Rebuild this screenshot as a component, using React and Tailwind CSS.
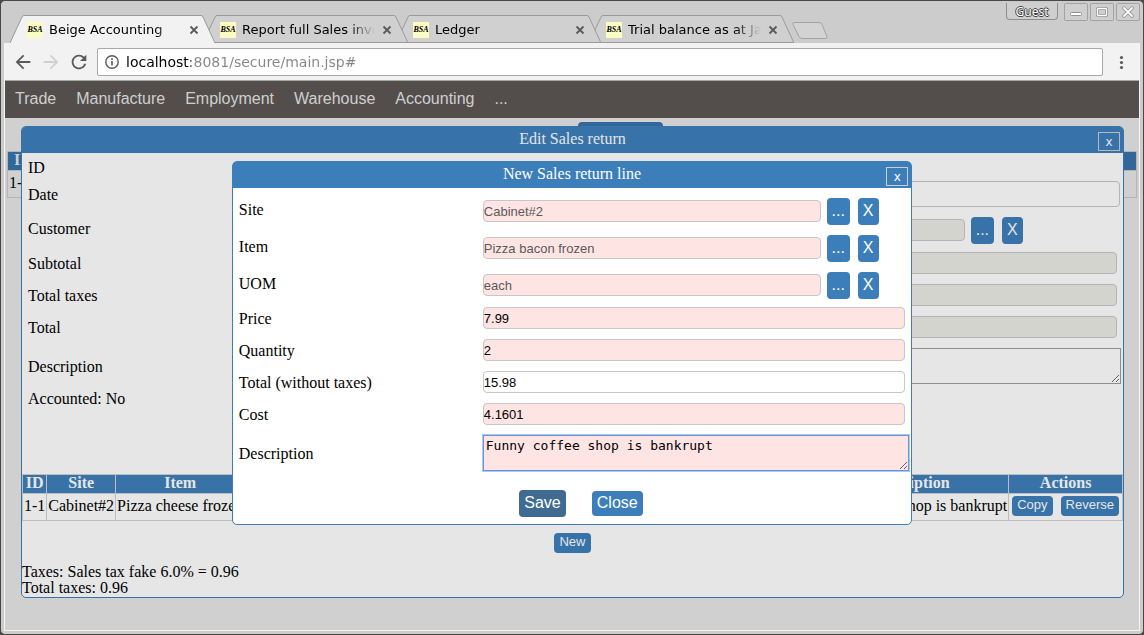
import React from "react";

const tabs = [
  { title: "Beige Accounting", active: true },
  { title: "Report full Sales invoice lines" },
  { title: "Ledger" },
  { title: "Trial balance as at Jan 31" },
];

const stack = ["z-40", "z-30", "z-20", "z-10"];

function Tab({ title, active, layer }) {
  return (
    <div className={`relative -mr-3 flex h-7 w-[205px] items-center pt-0.5 pl-[17px] ${layer}`}>
      <svg className="absolute inset-0 h-7 w-[205px]" viewBox="0 0 205 28" aria-hidden="true">
        <path
          d="M0 28 L12 2 Q12.500 .5 14 .5 H191 Q192.500 .5 193 2 L205 28 Z"
          fill={active ? "#f2f2f2" : "#d0d0d0"}
        />
        <path
          d="M0 28 L12 2 Q12.500 .5 14 .5 H191 Q192.500 .5 193 2 L205 28"
          fill="none"
          stroke="#9a9a9a"
        />
        {!active && <path d="M0 27.500 H205" stroke="#9a9a9a" />}
      </svg>
      <span className="relative flex size-4 items-center justify-center bg-[#fbfbc4] font-['Liberation_Serif',serif] text-[8px] leading-4 font-bold text-black italic">
        BSA
      </span>
      <span className="relative ml-1.5 w-[133px] overflow-hidden mask-r-from-80% font-['DejaVu_Sans',sans-serif] text-[13px] leading-5 whitespace-nowrap text-black">
        {title}
      </span>
      <button className="relative ml-1 flex size-4 items-center justify-center" aria-label={`Close ${title}`}>
        <svg className="size-2.5" viewBox="0 0 10 10" aria-hidden="true">
          <path d="M1.500 1.500 L8.500 8.500 M8.500 1.500 L1.500 8.500" stroke="#5a5a5a" strokeWidth="1.800" fill="none" />
        </svg>
      </button>
    </div>
  );
}

function WindowButton({ label, children }) {
  return (
    <button
      aria-label={label}
      className="flex h-[18px] w-6 items-center justify-center rounded-xs border border-[#a3a3a3] bg-[#cfcfcf]"
    >
      <svg className="h-3 w-4" viewBox="0 0 16 12" fill="none" aria-hidden="true">
        {children}
      </svg>
    </button>
  );
}

function TitleBar() {
  return (
    <div className="flex h-10 items-start justify-between">
      <div className="flex self-end pl-1.5">
        {tabs.map((tab, i) => (
          <Tab key={tab.title} {...tab} layer={stack[i]} />
        ))}
        <button className="relative ml-2 h-7 w-10" aria-label="New tab">
          <svg className="h-7 w-10" viewBox="0 0 40 28" aria-hidden="true">
            <path
              d="M4 7.500 H29 Q31 7.500 32 9.500 L37 21.500 Q37.500 23.500 35.500 23.500 H12 Q10 23.500 9 21.500 L3 9.500 Q2.500 7.500 4 7.500 Z"
              fill="#d3d3d3"
              stroke="#a3a3a3"
            />
          </svg>
        </button>
      </div>
      <div className="flex items-start gap-0.5">
        <button className="mr-1 flex h-[17px] w-[52px] items-center justify-center rounded-b-sm border border-t-0 border-[#8f8f8f] bg-[#cfcfcf] pt-0.5 font-['Noto_Sans',sans-serif] text-xs leading-4 text-white [text-shadow:1px_0_#444,-1px_0_#444,0_1px_#444,0_-1px_#444]">
          Guest
        </button>
        <WindowButton label="Minimize">
          <rect x="2.500" y="6.500" width="11" height="3" rx="1" fill="#fff" stroke="#8f8f8f" />
        </WindowButton>
        <WindowButton label="Maximize">
          <rect x="3.500" y="2.500" width="9" height="7" rx="1" stroke="#8f8f8f" strokeWidth="3" />
          <rect x="3.500" y="2.500" width="9" height="7" rx="1" stroke="#fff" strokeWidth="1.400" />
        </WindowButton>
        <WindowButton label="Close window">
          <path d="M4 2 L12 10 M12 2 L4 10" stroke="#8f8f8f" strokeWidth="3.400" strokeLinecap="round" />
          <path d="M4 2 L12 10 M12 2 L4 10" stroke="#fff" strokeWidth="1.800" strokeLinecap="round" />
        </WindowButton>
      </div>
    </div>
  );
}

function ToolIcon({ label, d, className }) {
  return (
    <button aria-label={label} className={`size-[22px] ${className}`}>
      <svg className="size-[22px]" viewBox="0 0 24 24" fill="currentColor" aria-hidden="true">
        <path d={d} />
      </svg>
    </button>
  );
}

function Toolbar() {
  return (
    <div className="flex h-[38px] items-center border-b border-[#a8a8a8] bg-[#f2f2f2] pl-[7px]">
      <ToolIcon
        label="Back"
        className="mr-1.5 text-[#5a5a5a]"
        d="M20 11H7.830l5.590-5.590L12 4l-8 8 8 8 1.410-1.410L7.830 13H20v-2z"
      />
      <ToolIcon
        label="Forward"
        className="mr-1.5 text-[#d0d0d0]"
        d="M4 11h12.170l-5.590-5.590L12 4l8 8-8 8-1.410-1.410L16.170 13H4v-2z"
      />
      <ToolIcon
        label="Reload"
        className="mr-[7px] text-[#5a5a5a]"
        d="M17.650 6.350A7.958 7.958 0 0 0 12 4c-4.420 0-7.990 3.580-7.990 8s3.570 8 7.990 8c3.730 0 6.840-2.550 7.730-6h-2.080A5.990 5.990 0 0 1 12 18c-3.310 0-6-2.690-6-6s2.690-6 6-6c1.660 0 3.140.690 4.220 1.780L13 11h7V4z"
      />
      <div className="flex h-7 flex-1 items-center rounded-xs border border-[#a8a8a8] bg-white pl-1.5">
        <svg className="size-4" viewBox="0 0 16 16" aria-hidden="true">
          <circle cx="8" cy="8" r="6.200" fill="none" stroke="#5a5a5a" strokeWidth="1.400" />
          <path d="M8 7 V11.500 M8 4.300 V5.900" stroke="#5a5a5a" strokeWidth="1.600" />
        </svg>
        <input
          aria-label="Address"
          defaultValue="localhost:8081/secure/main.jsp#"
          className="ml-1.5 flex-1 bg-[linear-gradient(to_right,#000_65px,#858585_65px)] bg-clip-text font-['DejaVu_Sans',sans-serif] text-sm text-transparent outline-none"
        />
      </div>
      <button aria-label="Menu" className="flex w-9 justify-center">
        <svg className="h-4 w-4" viewBox="0 0 16 16" fill="#5a5a5a" aria-hidden="true">
          <circle cx="8.500" cy="3.500" r="1.600" />
          <circle cx="8.500" cy="8.500" r="1.600" />
          <circle cx="8.500" cy="13.500" r="1.600" />
        </svg>
      </button>
    </div>
  );
}

const menu = ["Trade", "Manufacture", "Employment", "Warehouse", "Accounting", "..."];

function Nav() {
  return (
    <nav className="flex h-[37px] items-center gap-5 bg-[#534e4c] px-2.5 pb-0.5 font-['Liberation_Sans',sans-serif] text-base text-[#cfcfcf]">
      {menu.map((item) => (
        <a key={item} href="#" className="leading-5">
          {item}
        </a>
      ))}
    </nav>
  );
}

const tones = {
  back: {
    frame: "border-[#3773a8] bg-[#e6e6e6]",
    head: "bg-[#3773a8] text-[#e6e6e6]",
    close: "border-[#b9b9b9]",
    button: "bg-[#3773a8] text-[#e6e6e6]",
  },
  front: {
    frame: "border-[#3c7eb9] bg-white",
    head: "bg-[#3c7eb9] text-white",
    close: "border-[#cdcdcd]",
    button: "bg-[#3c7eb9] text-white",
  },
};

function Dialog({ title, tone, className, children }) {
  const t = tones[tone];
  return (
    <section role="dialog" aria-label={title} className={`rounded-[5px] border ${t.frame} ${className}`}>
      <header className={`relative flex h-[26px] items-center justify-center rounded-t-[3px] pb-0.5 ${t.head}`}>
        <h2 className="leading-5">{title}</h2>
        <button
          aria-label="Close"
          className={`absolute top-[5px] right-[3px] h-[19px] w-[22px] border font-['DejaVu_Sans',sans-serif] text-xs leading-4 ${t.close}`}
        >
          x
        </button>
      </header>
      {children}
    </section>
  );
}

function Row({ label, id, pad, labelPad = "pt-0.5", children }) {
  return (
    <div className={`flex items-center ${pad}`}>
      <label htmlFor={id} className={`w-[244px] shrink-0 leading-5 ${labelPad}`}>
        {label}
      </label>
      <div className="flex flex-1 items-start">{children}</div>
    </div>
  );
}

const inputBase =
  "h-[22px] min-w-0 rounded-[4px] border p-0 font-['Liberation_Sans',sans-serif] text-[13px] outline-none";

function Lookup({ label, id, value, tone, inputClass }) {
  const t = tones[tone];
  return (
    <Row label={label} id={id} pad="pt-1.5 pb-1" labelPad="pb-1">
      <input id={id} defaultValue={value} readOnly className={`${inputBase} mt-0.5 ${inputClass}`} />
      <button
        aria-label={`Choose ${label}`}
        className={`ml-1.5 h-[27px] w-[23px] rounded-[4px] pb-0.5 font-['Liberation_Sans',sans-serif] leading-6 ${t.button}`}
      >
        ...
      </button>
      <button
        aria-label={`Clear ${label}`}
        className={`ml-2 h-[27px] w-[21px] rounded-[4px] pb-0.5 font-['Liberation_Sans',sans-serif] leading-6 ${t.button}`}
      >
        X
      </button>
    </Row>
  );
}

function Field({ label, id, value, inputClass }) {
  return (
    <Row label={label} id={id} pad="pt-1 pb-1.5">
      <input id={id} defaultValue={value} className={`${inputBase} w-full ${inputClass}`} />
    </Row>
  );
}

const small =
  "h-5 rounded-[4px] bg-[#3773a8] px-[5px] pb-0.5 font-['Liberation_Sans',sans-serif] text-[13px] leading-4 text-[#e6e6e6]";
const head = "border border-[#bdbdbd] bg-[#3773a8] px-0.5 pt-0 pb-0.5 text-center leading-4 font-bold text-[#e6e6e6]";
const cell = "h-[27px] border border-[#bdbdbd] px-px pt-0 pb-0.5 leading-5 whitespace-nowrap";

function ReturnDialog() {
  const gray = "border-[#b4b4b4] bg-[#d3d4ce]";
  return (
    <Dialog title="Edit Sales return" tone="back" className="relative pb-px">
      <div className="pt-[5px] pr-1.5 pl-1.5">
        <div className="leading-5">ID</div>
        <Row label="Date" id="date" pad="pt-[3px] pb-1">
          <input
            id="date"
            className="-mr-[3px] h-[26px] flex-1 rounded-[4px] border border-[#b4b4b4] bg-transparent outline-none"
          />
        </Row>
        <Lookup label="Customer" id="customer" tone="back" inputClass={`w-[82%] ${gray}`} />
        <Field label="Subtotal" id="subtotal" inputClass={gray} />
        <Field label="Total taxes" id="taxes" inputClass={gray} />
        <Field label="Total" id="total" inputClass={gray} />
        <Row label="Description" id="description" pad="pt-1 pb-1.5">
          <textarea
            id="description"
            className="-mr-1 h-9 flex-1 resize border border-[#8e8e8e] bg-transparent outline-none"
          />
        </Row>
        <div className="leading-[18px]">Accounted: No</div>
      </div>
      <table className="mt-[66px] w-full border-collapse">
        <thead>
          <tr>
            <th className={head}>ID</th>
            <th className={head}>Site</th>
            <th className={head}>Item</th>
            <th className={`${head} w-full`}></th>
            <th className={head}>Description</th>
            <th className={head}>Actions</th>
          </tr>
        </thead>
        <tbody>
          <tr>
            <td className={cell}>1-1</td>
            <td className={cell}>Cabinet#2</td>
            <td className={cell}>Pizza cheese frozen</td>
            <td className={cell}></td>
            <td className={cell}>Funny coffee shop is bankrupt</td>
            <td className={cell}>
              <div className="flex gap-2 pr-0.5 pl-0.5">
                <button className={small}>Copy</button>
                <button className={small}>Reverse</button>
              </div>
            </td>
          </tr>
        </tbody>
      </table>
      <div className="flex justify-center pt-3">
        <button className={small}>New</button>
      </div>
      <p className="pt-[11px] leading-4">
        Taxes: Sales tax fake 6.0% = 0.96
        <br />
        Total taxes: 0.96
      </p>
    </Dialog>
  );
}

function LineDialog() {
  const pink = "border-[#c6c6c6] bg-[#ffe4e4]";
  return (
    <Dialog title="New Sales return line" tone="front" className="absolute top-[43px] left-1/5 w-3/5">
      <form className="pt-1 pr-1.5 pl-1.5" onSubmit={(e) => e.preventDefault()}>
        <Lookup label="Site" id="site" value="Cabinet#2" tone="front" inputClass={`w-4/5 text-[#5a5a5a] ${pink}`} />
        <Lookup
          label="Item"
          id="item"
          value="Pizza bacon frozen"
          tone="front"
          inputClass={`w-4/5 text-[#5a5a5a] ${pink}`}
        />
        <Lookup label="UOM" id="uom" value="each" tone="front" inputClass={`w-4/5 text-[#5a5a5a] ${pink}`} />
        <Field label="Price" id="price" value="7.99" inputClass={pink} />
        <Field label="Quantity" id="quantity" value="2" inputClass={pink} />
        <Field label="Total (without taxes)" id="line-total" value="15.98" inputClass="border-[#c6c6c6] bg-white" />
        <Field label="Cost" id="cost" value="4.1601" inputClass={pink} />
        <Row label="Description" id="line-description" pad="pt-1 pb-1.5">
          <textarea
            id="line-description"
            defaultValue="Funny coffee shop is bankrupt"
            className="-mr-1 h-9 flex-1 resize border border-[#6b94d8] bg-[#ffe4e4] px-0.5 py-0.5 font-['DejaVu_Sans_Mono',monospace] text-[13px] leading-4 ring-1 ring-[#a9c7fa] outline-none"
          />
        </Row>
        <div className="flex items-center justify-center gap-[26px] pt-[13px] pb-[7px] pl-[18px] font-['Liberation_Sans',sans-serif] leading-5 text-white">
          <button className="h-[27px] rounded-[4px] bg-[#3f6b92] px-[5px] pb-0.5">Save</button>
          <button type="button" className="h-[25px] rounded-[4px] bg-[#3c7eb9] px-[5px] pb-0.5">
            Close
          </button>
        </div>
      </form>
    </Dialog>
  );
}

function Page() {
  return (
    <main className="relative flex-1 bg-[#d0d0d0] font-['Liberation_Serif',serif] text-base text-black">
      <div className="px-0.5 pt-1">
        <div className="flex justify-center pl-[97px]">
          <button className="h-[25px] w-[85px] rounded-[4px] bg-[#326899]" aria-label="New return"></button>
        </div>
        <table className="mt-1 w-full border-collapse">
          <thead>
            <tr>
              <th className="border border-[#b4b4b4] bg-[#326899] pt-0 pr-0 pb-0.5 pl-1.5 text-left leading-4 text-[#d0d0d0]">
                ID
              </th>
            </tr>
          </thead>
          <tbody>
            <tr>
              <td className="h-[27px] border border-[#b4b4b4] px-px pt-0 pb-0.5 leading-5">1-1</td>
            </tr>
          </tbody>
        </table>
      </div>
      <div className="absolute top-2 right-[15px] left-4">
        <ReturnDialog />
      </div>
      <LineDialog />
    </main>
  );
}

export default function App() {
  return (
    <div className="min-h-screen bg-[#4a4747]">
      <div className="flex min-h-screen flex-col rounded-[5px] border border-[#4a4747] bg-[#cccccc] px-[3px] pt-0.5 pb-[3px]">
        <TitleBar />
        <div className="flex flex-1 flex-col border border-t-0 border-[#f4f4f4]">
          <Toolbar />
          <Nav />
          <Page />
        </div>
      </div>
    </div>
  );
}
